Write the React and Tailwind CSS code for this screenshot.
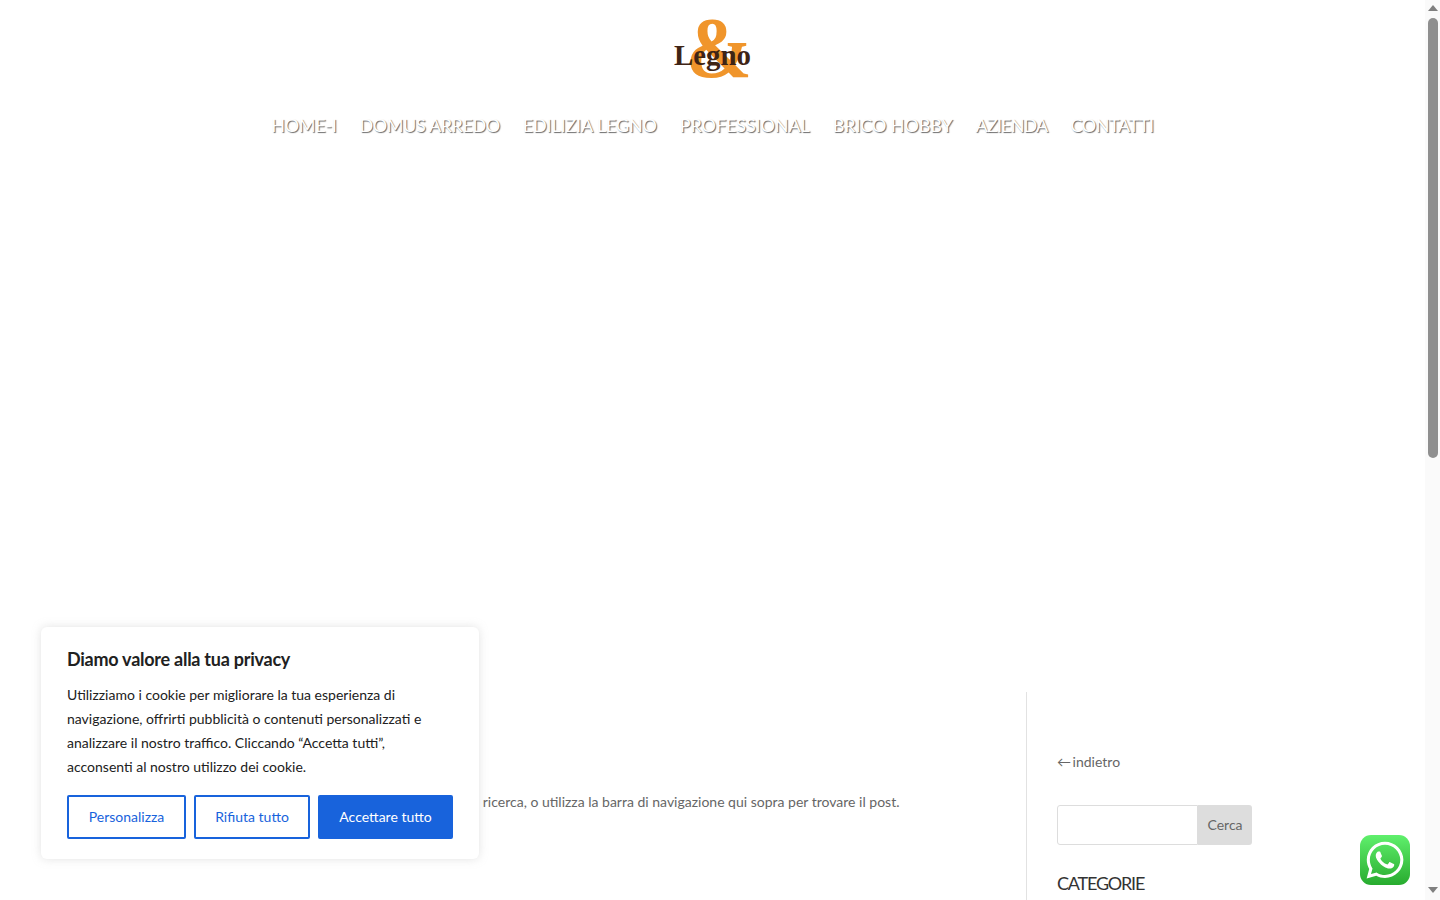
import React from "react";
import { FaWhatsapp } from "react-icons/fa";

const NAV = [
  ["HOME-I", "tracking-[-0.3px]"],
  ["DOMUS ARREDO", "tracking-[-0.4px]"],
  ["EDILIZIA LEGNO", "tracking-[-0.15px]"],
  ["PROFESSIONAL", "tracking-[-0.1px]"],
  ["BRICO HOBBY", "tracking-[-0.1px]"],
  ["AZIENDA", "tracking-[-0.85px]"],
  ["CONTATTI", "tracking-[-0.4px]"],
];

function Logo() {
  return (
    <svg width="90" height="66" viewBox="0 0 90 66" className="block overflow-visible">
      <text x="18" y="60" fontFamily="'Liberation Serif', serif" fontWeight="700" fontSize="86" fill="#f0952b" textLength="66" lengthAdjust="spacingAndGlyphs">&amp;</text>
      <text x="6" y="48" fontFamily="'Liberation Serif', serif" fontWeight="700" fontSize="29" fill="#3f2415" textLength="77" lengthAdjust="spacingAndGlyphs">Legno</text>
    </svg>
  );
}

export default function App() {
  return (
    <div className="flex h-[900px] w-[1440px] overflow-hidden bg-white font-['Lato','Noto_Sans',sans-serif] text-[14px] text-[#666]">
      <div className="relative w-[1425px] shrink-0">
        <header className="flex flex-col items-center pt-[17px]">
          <Logo />
          <nav className="mt-[32px] flex h-[20px] items-center gap-[23px] text-[18px] leading-[20px] text-white [text-shadow:1px_1px_1px_rgba(0,0,0,0.6)]">
            {NAV.map(([n, t]) => (
              <a key={n} className={`whitespace-nowrap ${t}`}>{n}</a>
            ))}
          </nav>
        </header>

        <div className="mx-auto mt-[557px] flex w-[1140px]">
          <main className="w-[883.5px] shrink-0 pt-[100px]">
            <p className="w-[757px] whitespace-nowrap text-right text-[14px] leading-[20px] text-[#666]">
              La pagina richiesta non è stata trovata. Affina la tua ricerca, o utilizza la barra di navigazione qui sopra per trovare il post.
            </p>
          </main>
          <aside className="h-[300px] flex-1 border-l border-[#e2e2e2] pl-[30px] pt-[60px]">
            <a className="block text-[14px] leading-[20px] text-[#666]"><span className="tracking-[-2px]">←</span> indietro</a>
            <form className="mt-[33px] flex h-[40px] w-[195px]">
              <input className="h-full w-[141px] rounded-l-[3px] border border-[#ddd] bg-white" aria-label="Cerca" />
              <button type="button" className="h-full w-[54px] rounded-r-[3px] bg-[#ddd] pb-[1px] text-[14px] text-[#666]">Cerca</button>
            </form>
            <h4 className="mt-[26px] text-[18px] leading-[24px] tracking-[-1.2px] text-[#333]">CATEGORIE</h4>
          </aside>
        </div>

        <div className="absolute bottom-[41px] left-[41px] w-[438px] rounded-[6px] bg-white px-[26px] pb-[20px] pt-[20px] text-[#212121] shadow-[0_0_10px_rgba(172,171,171,0.35)]">
          <p className="text-[18px] font-bold leading-[24px] tracking-[-0.25px] text-[#212121]">Diamo valore alla tua privacy</p>
          <p className="mt-[12px] text-[14px] leading-[24px] text-[#212121]">
            Utilizziamo i cookie per migliorare la tua esperienza di<br />
            navigazione, offrirti pubblicità o contenuti personalizzati e<br />
            analizzare il nostro traffico. Cliccando “Accetta tutti”,<br />
            acconsenti al nostro utilizzo dei cookie.
          </p>
          <div className="mt-[16px] flex gap-[8px]">
            <button type="button" className="h-[44px] w-[119px] rounded-[2px] border-2 border-[#1863dc] bg-white pb-[2px] text-[14px] text-[#1863dc]">Personalizza</button>
            <button type="button" className="h-[44px] w-[116px] rounded-[2px] border-2 border-[#1863dc] bg-white pb-[2px] text-[14px] text-[#1863dc]">Rifiuta tutto</button>
            <button type="button" className="h-[44px] w-[135px] rounded-[2px] border-2 border-[#1863dc] bg-[#1863dc] pb-[2px] text-[14px] text-white">Accettare tutto</button>
          </div>
        </div>

        <a className="absolute bottom-[15px] right-[15px] flex h-[50px] w-[50px] items-center justify-center rounded-[11px] bg-gradient-to-b from-[#5ff06c] to-[#27ab2e] text-white">
          <FaWhatsapp size={42} />
        </a>
      </div>

      <div className="flex h-[900px] w-[15px] shrink-0 flex-col items-center bg-[#fafafa]">
        <div className="mt-[5px] h-0 w-0 border-x-[5px] border-b-[6px] border-x-transparent border-b-[#7f7f7f]" />
        <div className="mt-[7px] h-[440px] w-[10px] rounded-t-[5px] rounded-b-[5px] bg-[#8f8f8f]" />
        <div className="mt-[429px] h-0 w-0 border-x-[5px] border-t-[6px] border-x-transparent border-t-[#7f7f7f]" />
      </div>
    </div>
  );
}
